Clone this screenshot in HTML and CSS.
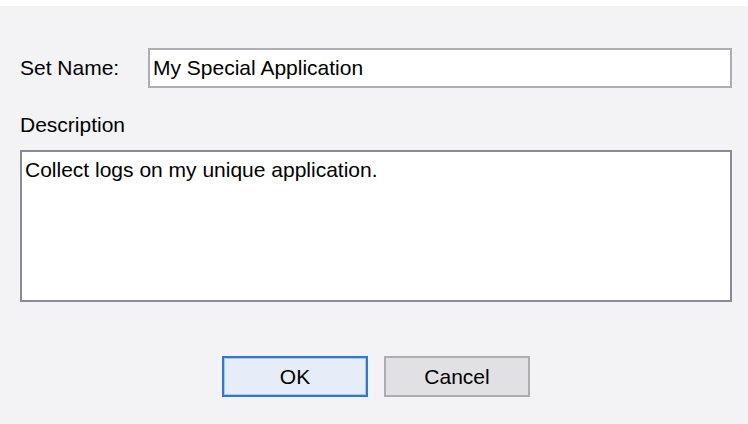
FILE: index.html
```html
<!DOCTYPE html>
<html>
<head>
<meta charset="utf-8">
<link rel="stylesheet" href="styles.css">
</head>
<body>
<div class="strip"></div>
<div class="dialog">
  <div class="row">
    <label class="label name-label">Set Name:</label>
    <input class="field" type="text" value="My Special Application">
  </div>
  <div class="label desc-label">Description</div>
  <textarea class="area">Collect logs on my unique application.</textarea>
  <div class="buttons">
    <button class="btn ok">OK</button>
    <button class="btn cancel">Cancel</button>
  </div>
</div>
</body>
</html>
```
FILE: styles.css
```css
html, body {
  margin: 0;
  padding: 0;
  width: 748px;
  height: 424px;
  overflow: hidden;
  background: #f3f2f5;
  font-family: "Liberation Sans", Arial, sans-serif;
  font-size: 21px;
  color: #000;
}
.strip {
  height: 6px;
  background: #ffffff;
}
.dialog {
  padding: 42px 16px 0 20px;
  display: flex;
  flex-direction: column;
}
.row {
  display: flex;
  align-items: center;
}
.label {
  line-height: 24px;
}
.name-label {
  width: 128px;
  flex: none;
}
.field {
  flex: 1;
  box-sizing: border-box;
  height: 40px;
  margin: 0;
  border: 2px solid #adadb3;
  background: #fff;
  padding: 0 3px;
  font: inherit;
  color: #000;
  outline: none;
}
.desc-label {
  margin-top: 25px;
}
.area {
  margin-top: 13px;
  box-sizing: border-box;
  height: 152px;
  width: 100%;
  border: 2px solid #8a8996;
  background: #fff;
  padding: 6px 3px;
  font: inherit;
  line-height: 24px;
  color: #000;
  resize: none;
  outline: none;
  display: block;
}
.buttons {
  margin-top: 54px;
  display: flex;
  justify-content: center;
  gap: 16px;
}
.btn {
  box-sizing: border-box;
  width: 146px;
  height: 41px;
  margin: 0;
  padding: 0;
  font: inherit;
  color: #000;
}
.ok {
  border: 2px solid #2f77d0;
  background: #e5eef8;
  box-shadow: inset 0 0 0 1px #a9c8ea;
}
.cancel {
  border: 2px solid #adadad;
  background: #e1e0e4;
}
```
